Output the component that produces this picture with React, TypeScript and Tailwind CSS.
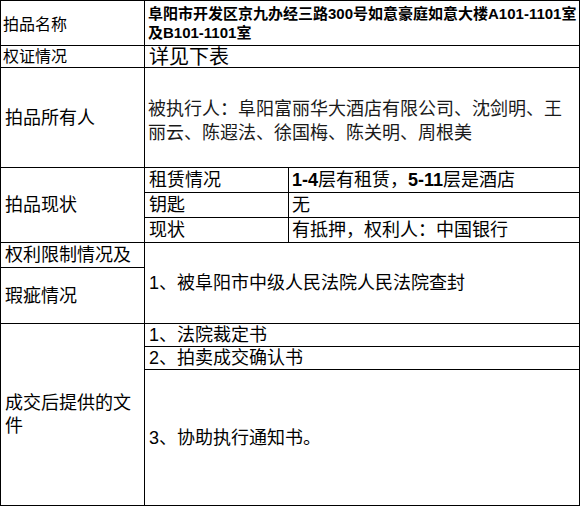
import React from "react";

const font = {
  fontFamily: '"Liberation Sans", "Noto Sans CJK SC", sans-serif',
};

const cell = "border-l border-t border-black flex items-center";

export default function App() {
  return (
    <div className="w-[580px] h-[506px] bg-white" style={font}>
      <div className="grid grid-cols-[144px_144px_291px] grid-rows-[45px_22px_100px_25px_25px_25px_25px_56px_23px_23px_136px] border-r border-b border-black text-black">
        {/* row 1 */}
        <div className={`${cell} pl-[2px] pt-[3px] text-[16px] leading-[18px]`}>拍品名称</div>
        <div className={`${cell} col-span-2 pl-[3px] text-[15px] leading-[19px] font-bold whitespace-nowrap`}>
          <div>
            阜阳市开发区京九办经三路300号如意豪庭如意大楼A101-1101室
            <br />
            及B101-1101室
          </div>
        </div>
        {/* row 2 */}
        <div className={`${cell} pl-[2px] text-[16px] leading-[18px]`}>权证情况</div>
        <div className={`${cell} col-span-2 pl-[4px] text-[20px] leading-[20px] items-end`}>详见下表</div>
        {/* row 3 */}
        <div className={`${cell} pl-[4px] text-[18px] leading-[20px]`}>拍品所有人</div>
        <div className={`${cell} col-span-2 pl-[3px] text-[18px] leading-[24px] text-[#1a1a1a] whitespace-nowrap`}>
          <div className="pt-[6px]">
            被执行人：阜阳富丽华大酒店有限公司、沈剑明、王
            <br />
            丽云、陈遐法、徐国梅、陈关明、周根美
          </div>
        </div>
        {/* rows 4-6 */}
        <div className={`${cell} row-span-3 pl-[4px] text-[18px] leading-[20px]`}>拍品现状</div>
        <div className={`${cell} pl-[4px] text-[18px] leading-[20px]`}>租赁情况</div>
        <div className={`${cell} pl-[3px] text-[18px] leading-[20px] whitespace-nowrap`}>
          <span className="font-bold">1-4</span>层有租赁，<span className="font-bold">5-11</span>层是酒店
        </div>
        <div className={`${cell} pl-[4px] text-[18px] leading-[20px]`}>钥匙</div>
        <div className={`${cell} pl-[3px] text-[18px] leading-[20px]`}>无</div>
        <div className={`${cell} pl-[4px] text-[18px] leading-[20px]`}>现状</div>
        <div className={`${cell} pl-[3px] text-[18px] leading-[20px] whitespace-nowrap`}>有抵押，权利人：中国银行</div>
        {/* rows 7-8 */}
        <div className={`${cell} pl-[4px] text-[18px] leading-[20px] whitespace-nowrap`}>权利限制情况及</div>
        <div className={`${cell} col-span-2 row-span-2 pl-[4px] text-[18px] leading-[20px] whitespace-nowrap`}>
          1、被阜阳市中级人民法院人民法院查封
        </div>
        <div className={`${cell} pl-[4px] text-[18px] leading-[20px]`}>瑕疵情况</div>
        {/* rows 9-11 */}
        <div className={`${cell} row-span-3 pl-[4px] text-[18px] leading-[23px]`}>
          <div>
            成交后提供的文
            <br />
            件
          </div>
        </div>
        <div className={`${cell} col-span-2 pl-[4px] text-[18px] leading-[20px]`}>1、法院裁定书</div>
        <div className={`${cell} col-span-2 pl-[4px] text-[18px] leading-[20px]`}>2、拍卖成交确认书</div>
        <div className={`${cell} col-span-2 pl-[4px] text-[18px] leading-[20px]`}>3、协助执行通知书。</div>
      </div>
    </div>
  );
}
